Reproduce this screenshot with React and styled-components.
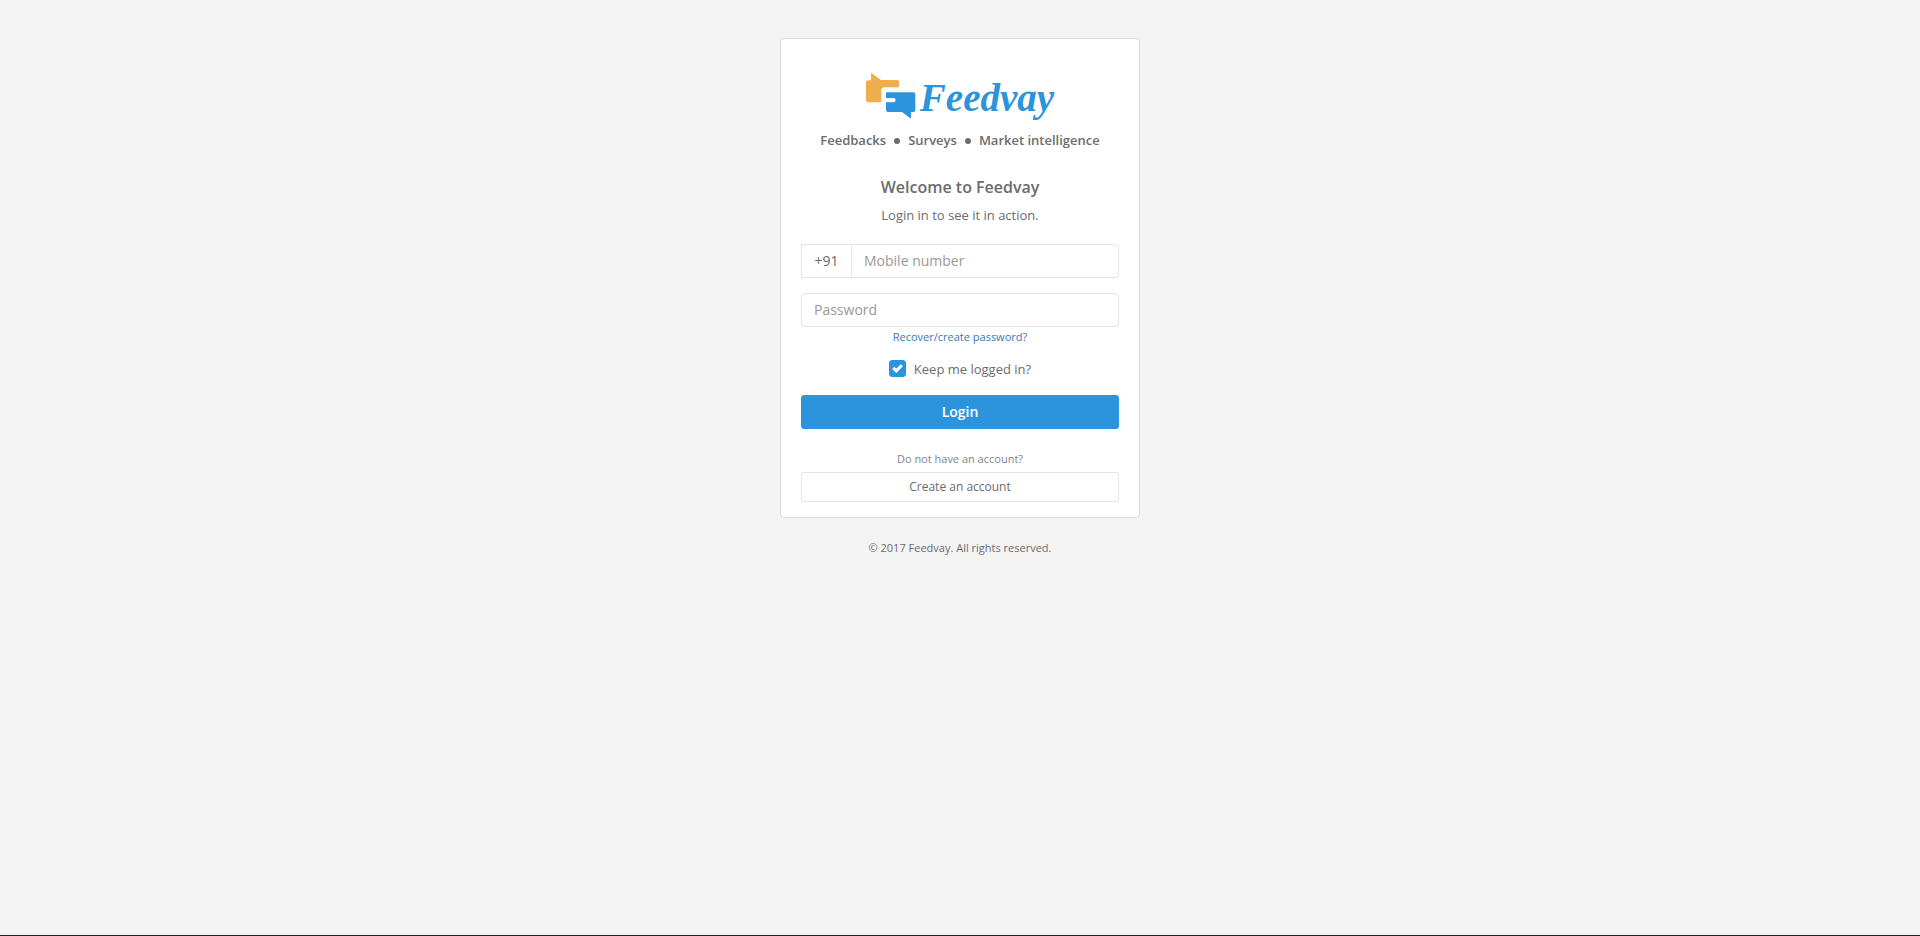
import React from "react";
import styled, { createGlobalStyle } from "styled-components";

const GlobalStyle = createGlobalStyle`
  *, *::before, *::after { box-sizing: border-box; }
  body {
    margin: 0;
    background: #f3f3f3;
    color: #6a6c6f;
    font-family: "Open Sans", "Noto Sans", sans-serif;
    font-size: 13px;
    line-height: 20px;
  }
  button, input { font: inherit; color: inherit; }
`;

const Page = styled.div`
  display: flex;
  flex-direction: column;
  align-items: center;
  min-height: 100vh;
  padding-top: 38px;
  border-bottom: 1px solid #231f20;
`;

const Card = styled.main`
  width: 100%;
  max-width: 360px;
  padding: 34px 20px 15px;
  background: #fff;
  border: 1px solid #dcdcdc;
  border-radius: 4px;
  text-align: center;
`;

const Brand = styled.div`
  display: flex;
  justify-content: center;
  gap: 4px;
  height: 46px;
`;

const Wordmark = styled.span`
  color: #2c94dc;
  font: italic bold 39px/50px "Liberation Serif", serif;
`;

const Tagline = styled.div`
  display: flex;
  justify-content: center;
  align-items: center;
  gap: 8px;
  margin-top: 11px;
  font-weight: 600;
`;

const Dot = styled.i`
  width: 6px;
  height: 6px;
  margin-top: 2px;
  border-radius: 50%;
  background: currentColor;
`;

const Title = styled.h1`
  margin: 27px 0 0;
  font-size: 16px;
  font-weight: 600;
  line-height: 20px;
`;

const Subtitle = styled.p`
  margin: 8px 0 19px;
`;

const Field = styled.div`
  display: flex;
  height: 34px;
  margin-bottom: ${(p) => (p.$tight ? 2 : 15)}px;
  border: 1px solid #e4e5e7;
  border-radius: ${(p) => (p.$prefixed ? "0 4px 4px 0" : "4px")};
  font-size: 14px;
`;

const Prefix = styled.label`
  width: 50px;
  padding: 6px 0;
  border-right: 1px solid #e4e5e7;
`;

const TextInput = styled.input`
  flex: 1;
  min-width: 0;
  padding: 0 12px;
  border: 0;
  border-radius: 4px;
  background: transparent;
  &::placeholder { color: #999; opacity: 1; }
`;

const RecoverLink = styled.a`
  display: block;
  color: #337ab7;
  font-size: 11px;
  line-height: 16px;
  text-decoration: none;
`;

const Remember = styled.label`
  display: flex;
  justify-content: center;
  gap: 8px;
  margin: 15px 0 17px;
  line-height: 18px;
`;

const CheckWrap = styled.span`
  display: grid;
  width: 17px;
  height: 17px;
  > * { grid-area: 1 / 1; }
  svg { place-self: center; pointer-events: none; }
`;

const Checkbox = styled.input`
  appearance: none;
  width: 17px;
  height: 17px;
  margin: 0;
  border: 1px solid #2c94dc;
  border-radius: 3px;
  background: #fff;
  &:checked { background: #2c94dc; }
`;

const Button = styled.button`
  display: block;
  width: 100%;
  height: ${(p) => (p.$primary ? 34 : 30)}px;
  padding: 0;
  border: 1px solid ${(p) => (p.$primary ? "#2c94dc" : "#e4e5e7")};
  border-radius: 3px;
  background: ${(p) => (p.$primary ? "#2c94dc" : "#fff")};
  color: ${(p) => (p.$primary ? "#fff" : "#6a6c6f")};
  font-size: ${(p) => (p.$primary ? 14 : 12)}px;
  font-weight: ${(p) => (p.$primary ? 600 : 400)};
  cursor: pointer;
`;

const Hint = styled.p`
  margin: 22px 0 5px;
  color: #828487;
  font-size: 11px;
  line-height: 16px;
`;

const Copyright = styled.footer`
  margin-top: 22px;
  font-size: 11px;
  line-height: 16px;
`;

function LogoMark() {
  return (
    <svg width="50" height="46" viewBox="18 20 150 138" aria-hidden="true">
      <path fill="#f0ad4e" d="M18 48Q18 42 24 42H33V23Q33 19 37 22L63 41H111Q117 41 117 47V63H74Q64 63 64 73V108H24Q18 108 18 102Z" />
      <path fill="#2c94dc" d="M78 78H160Q166 78 166 84V131Q166 137 160 137H153V154Q153 157 150 155L126 137H84Q78 137 78 131V108H100Q107 108 107 101Q107 95 100 95H78Z" />
    </svg>
  );
}

export default function App() {
  return (
    <>
      <GlobalStyle />
      <Page>
        <Card>
          <Brand>
            <LogoMark />
            <Wordmark>Feedvay</Wordmark>
          </Brand>
          <Tagline>
            <span>Feedbacks</span>
            <Dot />
            <span>Surveys</span>
            <Dot />
            <span>Market intelligence</span>
          </Tagline>
          <Title>Welcome to Feedvay</Title>
          <Subtitle>Login in to see it in action.</Subtitle>
          <form onSubmit={(e) => e.preventDefault()}>
            <Field $prefixed>
              <Prefix htmlFor="mobile">+91</Prefix>
              <TextInput id="mobile" type="tel" placeholder="Mobile number" aria-label="Mobile number" />
            </Field>
            <Field $tight>
              <TextInput type="password" placeholder="Password" aria-label="Password" />
            </Field>
            <RecoverLink href="#recover">Recover/create password?</RecoverLink>
            <Remember>
              <CheckWrap>
                <Checkbox type="checkbox" defaultChecked />
                <svg width="11" height="9" viewBox="0 0 11 9" aria-hidden="true">
                  <path d="M1.2 3.8L4.3 6.8L9.8 1.3" fill="none" stroke="#fff" strokeWidth="3" />
                </svg>
              </CheckWrap>
              Keep me logged in?
            </Remember>
            <Button type="submit" $primary>Login</Button>
          </form>
          <Hint>Do not have an account?</Hint>
          <Button type="button">Create an account</Button>
        </Card>
        <Copyright>© 2017 Feedvay. All rights reserved.</Copyright>
      </Page>
    </>
  );
}
